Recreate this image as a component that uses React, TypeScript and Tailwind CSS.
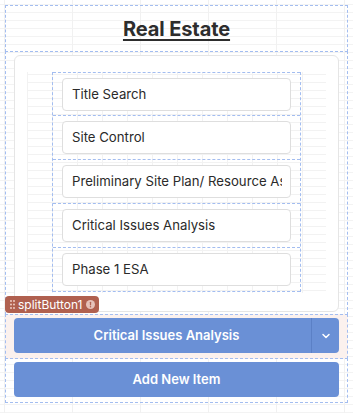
import { ChevronDown } from "lucide-react";

const items = [
  "Title Search",
  "Site Control",
  "Preliminary Site Plan/ Resource Assessment",
  "Critical Issues Analysis",
  "Phase 1 ESA",
];

export default function App() {
  return (
    <div
      className="relative w-[353px] h-[413px] overflow-hidden bg-white pt-[5px] px-[5px] font-['Inter',sans-serif] bg-[linear-gradient(to_right,#f1f1f1_1px,transparent_1px),linear-gradient(to_bottom,#f3f3f3_1px,transparent_1px)] bg-[size:68px_8px,8px_8px] bg-[position:4px_0,0_4px]"
    >
      {/* title */}
      <div className="h-[47px] border border-dashed border-[#a3bdf0] flex items-center justify-center">
        <h1 className="text-[20px] font-bold text-[#2d2d2d] underline underline-offset-[3px] decoration-[2px] tracking-[-0.1px]">
          Real Estate
        </h1>
      </div>

      {/* list container */}
      <div className="h-[264px] -mt-px border border-dashed border-[#a3bdf0] px-[8px] pt-[3px]">
        <div className="h-[257px] rounded-[6px] border border-[#e5e5e5] bg-white px-[12px] pt-[16px]">
          <div className="h-[221px] px-[25px] bg-[linear-gradient(to_right,#f2f2f2_1px,transparent_1px),linear-gradient(to_bottom,#f2f2f2_1px,transparent_1px)] bg-[size:25px_8px] bg-[position:0_2px]">
            <div className="border-x border-dashed border-[#a3bdf0]">
              {items.map((item, i) => (
                <div
                  key={item}
                  className={
                    "h-[44px] px-[9px] pt-[5px] border-dashed border-[#a3bdf0] " +
                    (i === 0 ? "border-t " : "") +
                    "border-b"
                  }
                >
                  <div className="h-[33px] rounded-[4px] border border-[#dedede] bg-white flex items-center pl-[9px] pr-[8px] overflow-hidden">
                    <span className="whitespace-nowrap overflow-hidden text-[13.2px] text-[#2a2a2a]">
                      {item}
                    </span>
                  </div>
                </div>
              ))}
            </div>
          </div>
        </div>
      </div>

      {/* component label */}
      <div className="absolute left-[5px] top-[296px] h-[17px] rounded-[4px] bg-[#b0604f] flex items-center pl-[5px] pr-[4px] gap-[3px]">
        <svg width="5" height="9" viewBox="0 0 5 9" fill="#f3d6cf">
          <circle cx="1" cy="1" r="0.9" />
          <circle cx="4" cy="1" r="0.9" />
          <circle cx="1" cy="4.5" r="0.9" />
          <circle cx="4" cy="4.5" r="0.9" />
          <circle cx="1" cy="8" r="0.9" />
          <circle cx="4" cy="8" r="0.9" />
        </svg>
        <span className="text-[12px] text-white leading-none">splitButton1</span>
        <svg width="9" height="9" viewBox="0 0 10 10">
          <circle cx="5" cy="5" r="5" fill="#e6c2ba" />
          <rect x="4.3" y="2" width="1.4" height="4" rx="0.6" fill="#b0604f" />
          <circle cx="5" cy="7.6" r="0.8" fill="#b0604f" />
        </svg>
      </div>

      {/* split button */}
      <div className="h-[45px] -mt-px border border-dashed border-[#a3bdf0] bg-[#fbf1ee] px-[8px] pt-[3px]">
        <div className="h-[35px] flex rounded-[4px] bg-[#6a90d6] text-white">
          <button className="flex-1 text-[13px] font-semibold pl-[8px]">
            Critical Issues Analysis
          </button>
          <div className="w-[28px] border-l border-[#5b80c6] flex items-center justify-center">
            <ChevronDown size={12} strokeWidth={3} />
          </div>
        </div>
      </div>

      {/* add button */}
      <div className="h-[45px] -mt-px border border-dashed border-[#a3bdf0] px-[8px] pt-[3px]">
        <button className="w-full h-[35px] rounded-[4px] bg-[#6a90d6] text-white text-[13px] font-semibold">
          Add New Item
        </button>
      </div>
    </div>
  );
}
